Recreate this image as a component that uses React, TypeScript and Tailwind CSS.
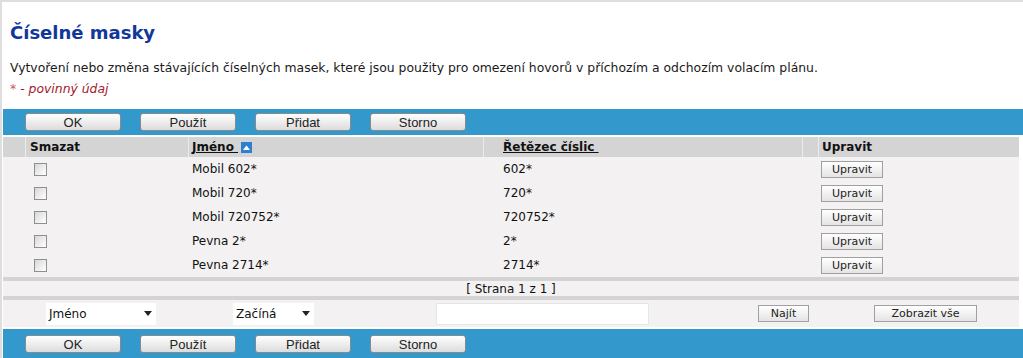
import React from 'react';

const rows = [
  { name: 'Mobil 602*', digits: '602*' },
  { name: 'Mobil 720*', digits: '720*' },
  { name: 'Mobil 720752*', digits: '720752*' },
  { name: 'Pevna 2*', digits: '2*' },
  { name: 'Pevna 2714*', digits: '2714*' },
];

const verdana = { fontFamily: '"DejaVu Sans", Verdana, sans-serif' };

const BarButton = ({ label }: { label: string }) => (
  <button
    className="w-[96px] h-[18px] rounded-[3px] border border-[#8a8a8a] bg-gradient-to-b from-white to-[#dcdcdc] text-[13px] leading-none text-[#222]"
    style={{ fontFamily: '"Liberation Sans", Arial, sans-serif' }}
  >
    {label}
  </button>
);

const ActionBar = ({ className = '' }: { className?: string }) => (
  <div className={`flex items-center gap-[19px] pl-[22px] bg-[#3399cc] ${className}`}>
    {['OK', 'Použít', 'Přidat', 'Storno'].map(l => (
      <BarButton key={l} label={l} />
    ))}
  </div>
);

const SmallButton = ({ label, w }: { label: string; w: string }) => (
  <button
    className={`${w} h-[17px] border border-[#a0a0a0] bg-gradient-to-b from-white to-[#e4e4e4] text-[11px] leading-none text-[#222]`}
    style={verdana}
  >
    {label}
  </button>
);

const Checkbox = () => (
  <div className="w-[13px] h-[13px] border border-[#8f8f8f] bg-gradient-to-br from-[#d8d8d8] to-white" />
);

const SortIcon = () => (
  <svg width="11" height="11" viewBox="0 0 11 11" className="ml-[3px]">
    <rect width="11" height="11" fill="#2f7fd0" />
    <path d="M2 8 L5.5 3.5 L9 8 Z" fill="white" />
  </svg>
);

const Select = ({ label, w }: { label: string; w: string }) => (
  <div className={`${w} h-[22px] bg-white flex items-center justify-between pl-[3px] pr-[4px] text-[12px] text-[#111]`}>
    <span>{label}</span>
    <svg width="8" height="5" viewBox="0 0 8 5">
      <path d="M0 0 L8 0 L4 5 Z" fill="#222" />
    </svg>
  </div>
);

export default function App() {
  return (
    <div className="w-[1023px] h-[358px] overflow-hidden bg-white border-t-2 border-l-2 border-[#dedede]" style={verdana}>
      <div className="h-[20px]" />
      <h1 className="pl-[8px] text-[18px] leading-[22px] font-bold text-[#12379b]">Číselné masky</h1>
      <p className="pl-[8px] mt-[16px] text-[12.4px] leading-[16px] text-[#1a1a1a]">
        Vytvoření nebo změna stávajících číselných masek, které jsou použity pro omezení hovorů v příchozím a odchozím volacím plánu.
      </p>
      <p className="pl-[8px] mt-[5px] text-[12.4px] leading-[16px] italic text-[#a3192c]">
        <span className="text-[#d05060]">*</span> - povinný údaj
      </p>

      <div className="mt-[12px] pl-[1px]">
        <ActionBar className="h-[26px]" />
        <div className="mr-[4px] mt-[2px] bg-[#f3f1f1]">
          {/* header */}
          <div className="flex h-[20px] bg-[#d4d4d4] text-[12px] font-bold text-[#111]">
            <div className="w-[22px]" />
            <div className="w-[163px] border-l border-[#ececec] pl-[4px] flex items-center">Smazat</div>
            <div className="w-[295px] border-l border-[#ececec] pl-[3px] flex items-center">
              <span className="underline">Jméno&nbsp;</span>
              <SortIcon />
            </div>
            <div className="w-[319px] border-l border-[#ececec] pl-[19px] flex items-center">
              <span className="underline">Řetězec číslic&nbsp;</span>
            </div>
            <div className="w-[16px] border-l border-[#ececec]" />
            <div className="flex-1 border-l border-[#ececec] pl-[3px] flex items-center">Upravit</div>
          </div>

          {rows.map(r => (
            <div key={r.name} className="flex h-[24px] items-center text-[12px] text-[#111]">
              <div className="w-[22px]" />
              <div className="w-[163px] pl-[9px]">
                <Checkbox />
              </div>
              <div className="w-[295px] pl-[4px]">{r.name}</div>
              <div className="w-[319px] pl-[20px]">{r.digits}</div>
              <div className="w-[16px]" />
              <div className="flex-1 pl-[3px]">
                <SmallButton label="Upravit" w="w-[62px]" />
              </div>
            </div>
          ))}

          <div className="h-[4px] bg-[#d4d4d4]" />
          <div className="h-[15px] flex items-center justify-center text-[12px] text-[#111]">[ Strana 1 z 1 ]</div>
          <div className="h-[4px] bg-[#d4d4d4]" />

          <div className="flex h-[27px] items-center">
            <div className="w-[43px]" />
            <Select label="Jméno" w="w-[110px]" />
            <div className="w-[77px]" />
            <Select label="Začíná" w="w-[81px]" />
            <div className="w-[122px]" />
            <div className="w-[213px] h-[22px] bg-white border border-[#e6e6e6]" />
            <div className="w-[109px]" />
            <SmallButton label="Najít" w="w-[51px]" />
            <div className="w-[65px]" />
            <SmallButton label="Zobrazit vše" w="w-[103px]" />
          </div>
        </div>
        <ActionBar className="h-[31px] mt-[2px] items-start pt-[6px]" />
      </div>
    </div>
  );
}
